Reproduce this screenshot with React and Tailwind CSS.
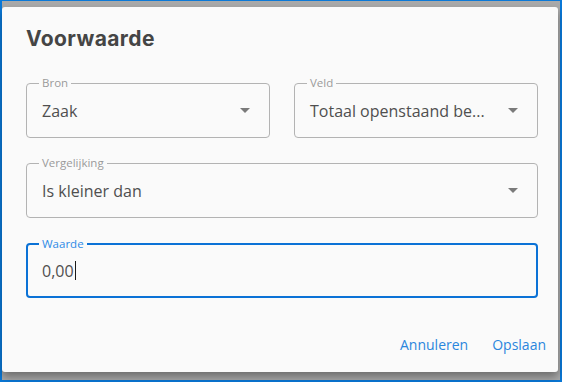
import React from "react";

function Arrow() {
  return (
    <svg width="10" height="5" viewBox="0 0 10 5" className="shrink-0">
      <path d="M0 0 L10 0 L5 5 Z" fill="#7a7a7a" />
    </svg>
  );
}

function Field({ label, value, select, focused, className = "" }) {
  return (
    <div
      className={
        "relative flex h-[55px] items-center justify-between rounded-[4px] " +
        (focused
          ? "border-2 border-[#0b72d6] pl-[14px] pr-[18px]"
          : "border border-[#b3b3b3] pl-[15px] pr-[19px]") +
        " " +
        className
      }
    >
      <span
        className={
          "absolute top-[-7px] bg-[#fafafa] px-[3px] text-[11.5px] leading-[12px] " +
          (focused ? "left-[11px] text-[#2e8ae6]" : "left-[12px] text-[#9a9a9a]")
        }
      >
        {label}
      </span>
      <span className="flex items-center text-[16px] leading-[22px] text-[#4f4f4f]">
        {value}
        {focused && <span className="ml-[1px] inline-block h-[19px] w-[1px] bg-[#1a1a1a]" />}
      </span>
      {select && <Arrow />}
    </div>
  );
}

export default function App() {
  return (
    <div
      className="h-[382px] w-[562px] border-t border-l-2 border-r-2 border-b-2 border-[#0a78d7] bg-[#a9a9a9] pt-[6px] pr-[2px] pb-[8px]"
      style={{ fontFamily: '"Open Sans", "Noto Sans", sans-serif' }}
    >
      <div className="flex h-[365px] flex-col rounded-[3px] bg-[#fafafa] pl-6 pr-5 shadow-[0_5px_8px_rgba(0,0,0,0.35)]">
        <h1
          className="pt-[19px] text-[21px] font-bold leading-[26px] tracking-[0.4px] text-[#454545]"
          style={{ fontFamily: "Inter, sans-serif" }}
        >
          Voorwaarde
        </h1>
        <div className="mt-[31px] grid grid-cols-2 gap-6">
          <Field label="Bron" value="Zaak" select />
          <Field label="Veld" value="Totaal openstaand be..." select />
        </div>
        <Field className="mt-[25px]" label="Vergelijking" value="Is kleiner dan" select />
        <Field className="mt-[25px]" label="Waarde" value="0,00" focused />
        <div className="mt-auto flex justify-end gap-6 pb-[17px]">
          <button className="text-[14px] text-[#2a86dd]">Annuleren</button>
          <button className="mr-[-8px] text-[14px] text-[#2a86dd]">Opslaan</button>
        </div>
      </div>
    </div>
  );
}
